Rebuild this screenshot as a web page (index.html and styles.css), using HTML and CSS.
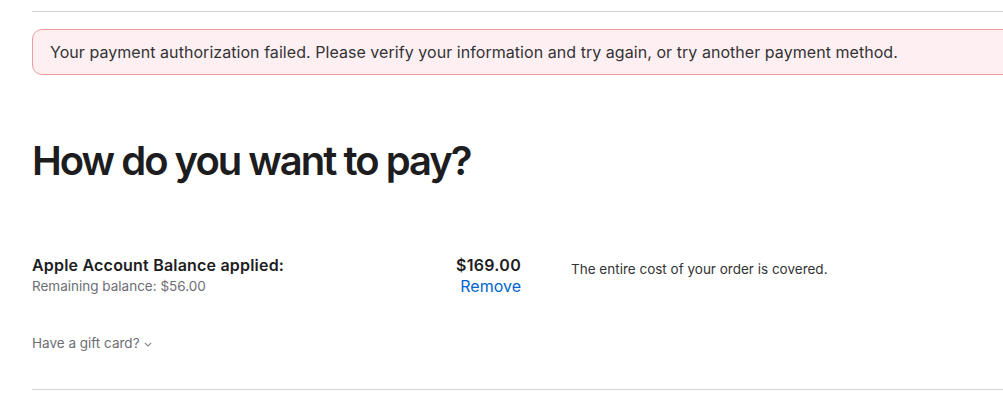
FILE: index.html
```html
<!DOCTYPE html>
<html>
<head>
<meta charset="utf-8">
<link rel="stylesheet" href="styles.css">
</head>
<body>
<div class="page">
  <hr class="rule top-rule">
  <div class="alert">Your payment authorization failed. Please verify your information and try again, or try another payment method.</div>
  <h1 class="title">How do you want to pay?</h1>
  <div class="balance">
    <div class="balance-main">
      <div class="balance-info">
        <div class="balance-label">Apple Account Balance applied:</div>
        <div class="balance-sub">Remaining balance: $56.00</div>
      </div>
      <div class="balance-amount">
        <div class="amount">$169.00</div>
        <a class="remove" href="#">Remove</a>
      </div>
    </div>
    <div class="balance-note">The entire cost of your order is covered.</div>
  </div>
  <div class="gift">Have a gift card? <svg class="chev" width="8" height="5" viewBox="0 0 8 5"><path d="M0.8 0.8 L4 4 L7.2 0.8" fill="none" stroke="#86868b" stroke-width="1.1"/></svg></div>
  <hr class="rule bottom-rule">
</div>
</body>
</html>
```

FILE: styles.css
```css
html, body {
  margin: 0;
  padding: 0;
  background: #fff;
}
body {
  font-family: Inter, "Liberation Sans", sans-serif;
  color: #1d1d1f;
  overflow: hidden;
}
.page {
  padding: 11px 0 0 32px;
  width: 1100px;
}
.rule {
  border: 0;
  border-top: 1px solid #d2d2d7;
  margin: 0;
}
.alert {
  margin-top: 17px;
  height: 46px;
  box-sizing: border-box;
  padding: 0 16px 0 17px;
  display: flex;
  align-items: center;
  border: 1px solid #ee9b9b;
  border-radius: 10px;
  background: #fef0f2;
  font-size: 16px;
  color: #333336;
  letter-spacing: 0.05px;
}
.title {
  margin: 64px 0 0;
  font-size: 40px;
  font-weight: 600;
  letter-spacing: -2px;
  line-height: 44px;
}
.balance {
  margin-top: 71px;
  display: flex;
  align-items: flex-start;
  gap: 50px;
}
.balance-main {
  width: 489px;
  display: flex;
  justify-content: space-between;
}
.balance-label {
  font-size: 16px;
  font-weight: 600;
  letter-spacing: 0.2px;
  line-height: 22px;
}
.balance-sub {
  font-size: 13.5px;
  color: #6e6e73;
  line-height: 20px;
}
.balance-amount {
  text-align: right;
}
.amount {
  font-size: 16px;
  font-weight: 600;
  letter-spacing: 0.3px;
  line-height: 22px;
}
.remove {
  font-size: 16px;
  color: #0066cc;
  text-decoration: none;
  line-height: 20px;
}
.balance-note {
  font-size: 13.5px;
  color: #333336;
  padding-top: 7px;
}
.gift {
  margin-top: 39px;
  font-size: 13.5px;
  color: #6e6e73;
  display: flex;
  align-items: center;
  gap: 4px;
}
.chev {
  margin-top: 3px;
}
.bottom-rule {
  margin-top: 38px;
}
```
